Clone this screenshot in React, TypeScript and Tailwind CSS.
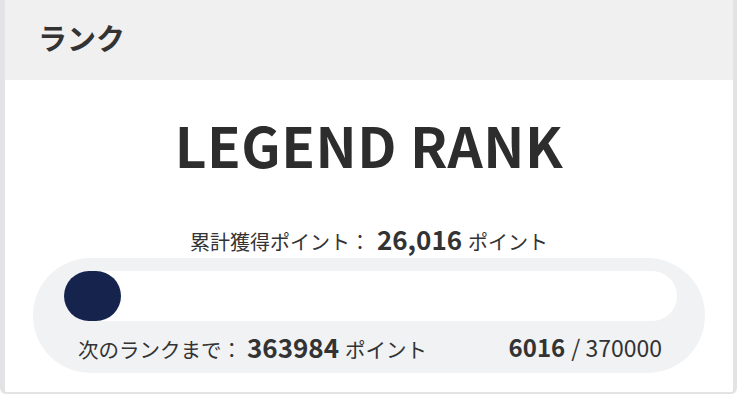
import React from "react";

export default function App() {
  const font = { fontFamily: '"Noto Sans CJK JP", "Noto Sans", sans-serif' };
  return (
    <div className="w-[740px] h-[415px] bg-white" style={font}>
      <div className="w-[737px] border-l-[5px] border-r-[4px] border-b-2 border-[#e3e3e5] rounded-b-[6px] overflow-hidden">
        <div className="h-[80px] bg-[#f0f0f0] flex items-center pl-[33px] pb-[5px]">
          <span className="text-[29px] font-bold text-[#333333] leading-none">ランク</span>
        </div>
        <div className="bg-white pt-[32px] pb-[19px]">
          <div className="text-center text-[55px] font-bold text-[#2d2d2d] leading-[65px] tracking-[0.5px]">
            LEGEND RANK
          </div>
          <div className="mt-[49px] flex items-baseline justify-center text-[#333333] leading-none">
            <span className="text-[20px]">累計獲得ポイント：</span>
            <span className="text-[26px] font-bold ml-[7px] mr-[6px]">26,016</span>
            <span className="text-[20px]">ポイント</span>
          </div>
          <div className="mx-[28px] mt-[6px] bg-[#f0f2f4] rounded-full pt-[13px] pl-[31px] pr-[28px]">
            <div className="h-[50px] bg-white rounded-full">
              <div className="h-full w-[57px] bg-[#15234d] rounded-full" />
            </div>
            <div className="h-[52px] flex items-center justify-between pl-[14px] pr-[15px] text-[#333333]">
              <div className="flex items-baseline leading-none">
                <span className="text-[20.5px]">次のランクまで：</span>
                <span className="text-[26px] font-bold ml-[5px] mr-[6px]">363984</span>
                <span className="text-[20.5px]">ポイント</span>
              </div>
              <div className="flex items-baseline leading-none">
                <span className="text-[24px] font-bold">6016</span>
                <span className="text-[23px] ml-[6px]">/ 370000</span>
              </div>
            </div>
          </div>
        </div>
      </div>
    </div>
  );
}
